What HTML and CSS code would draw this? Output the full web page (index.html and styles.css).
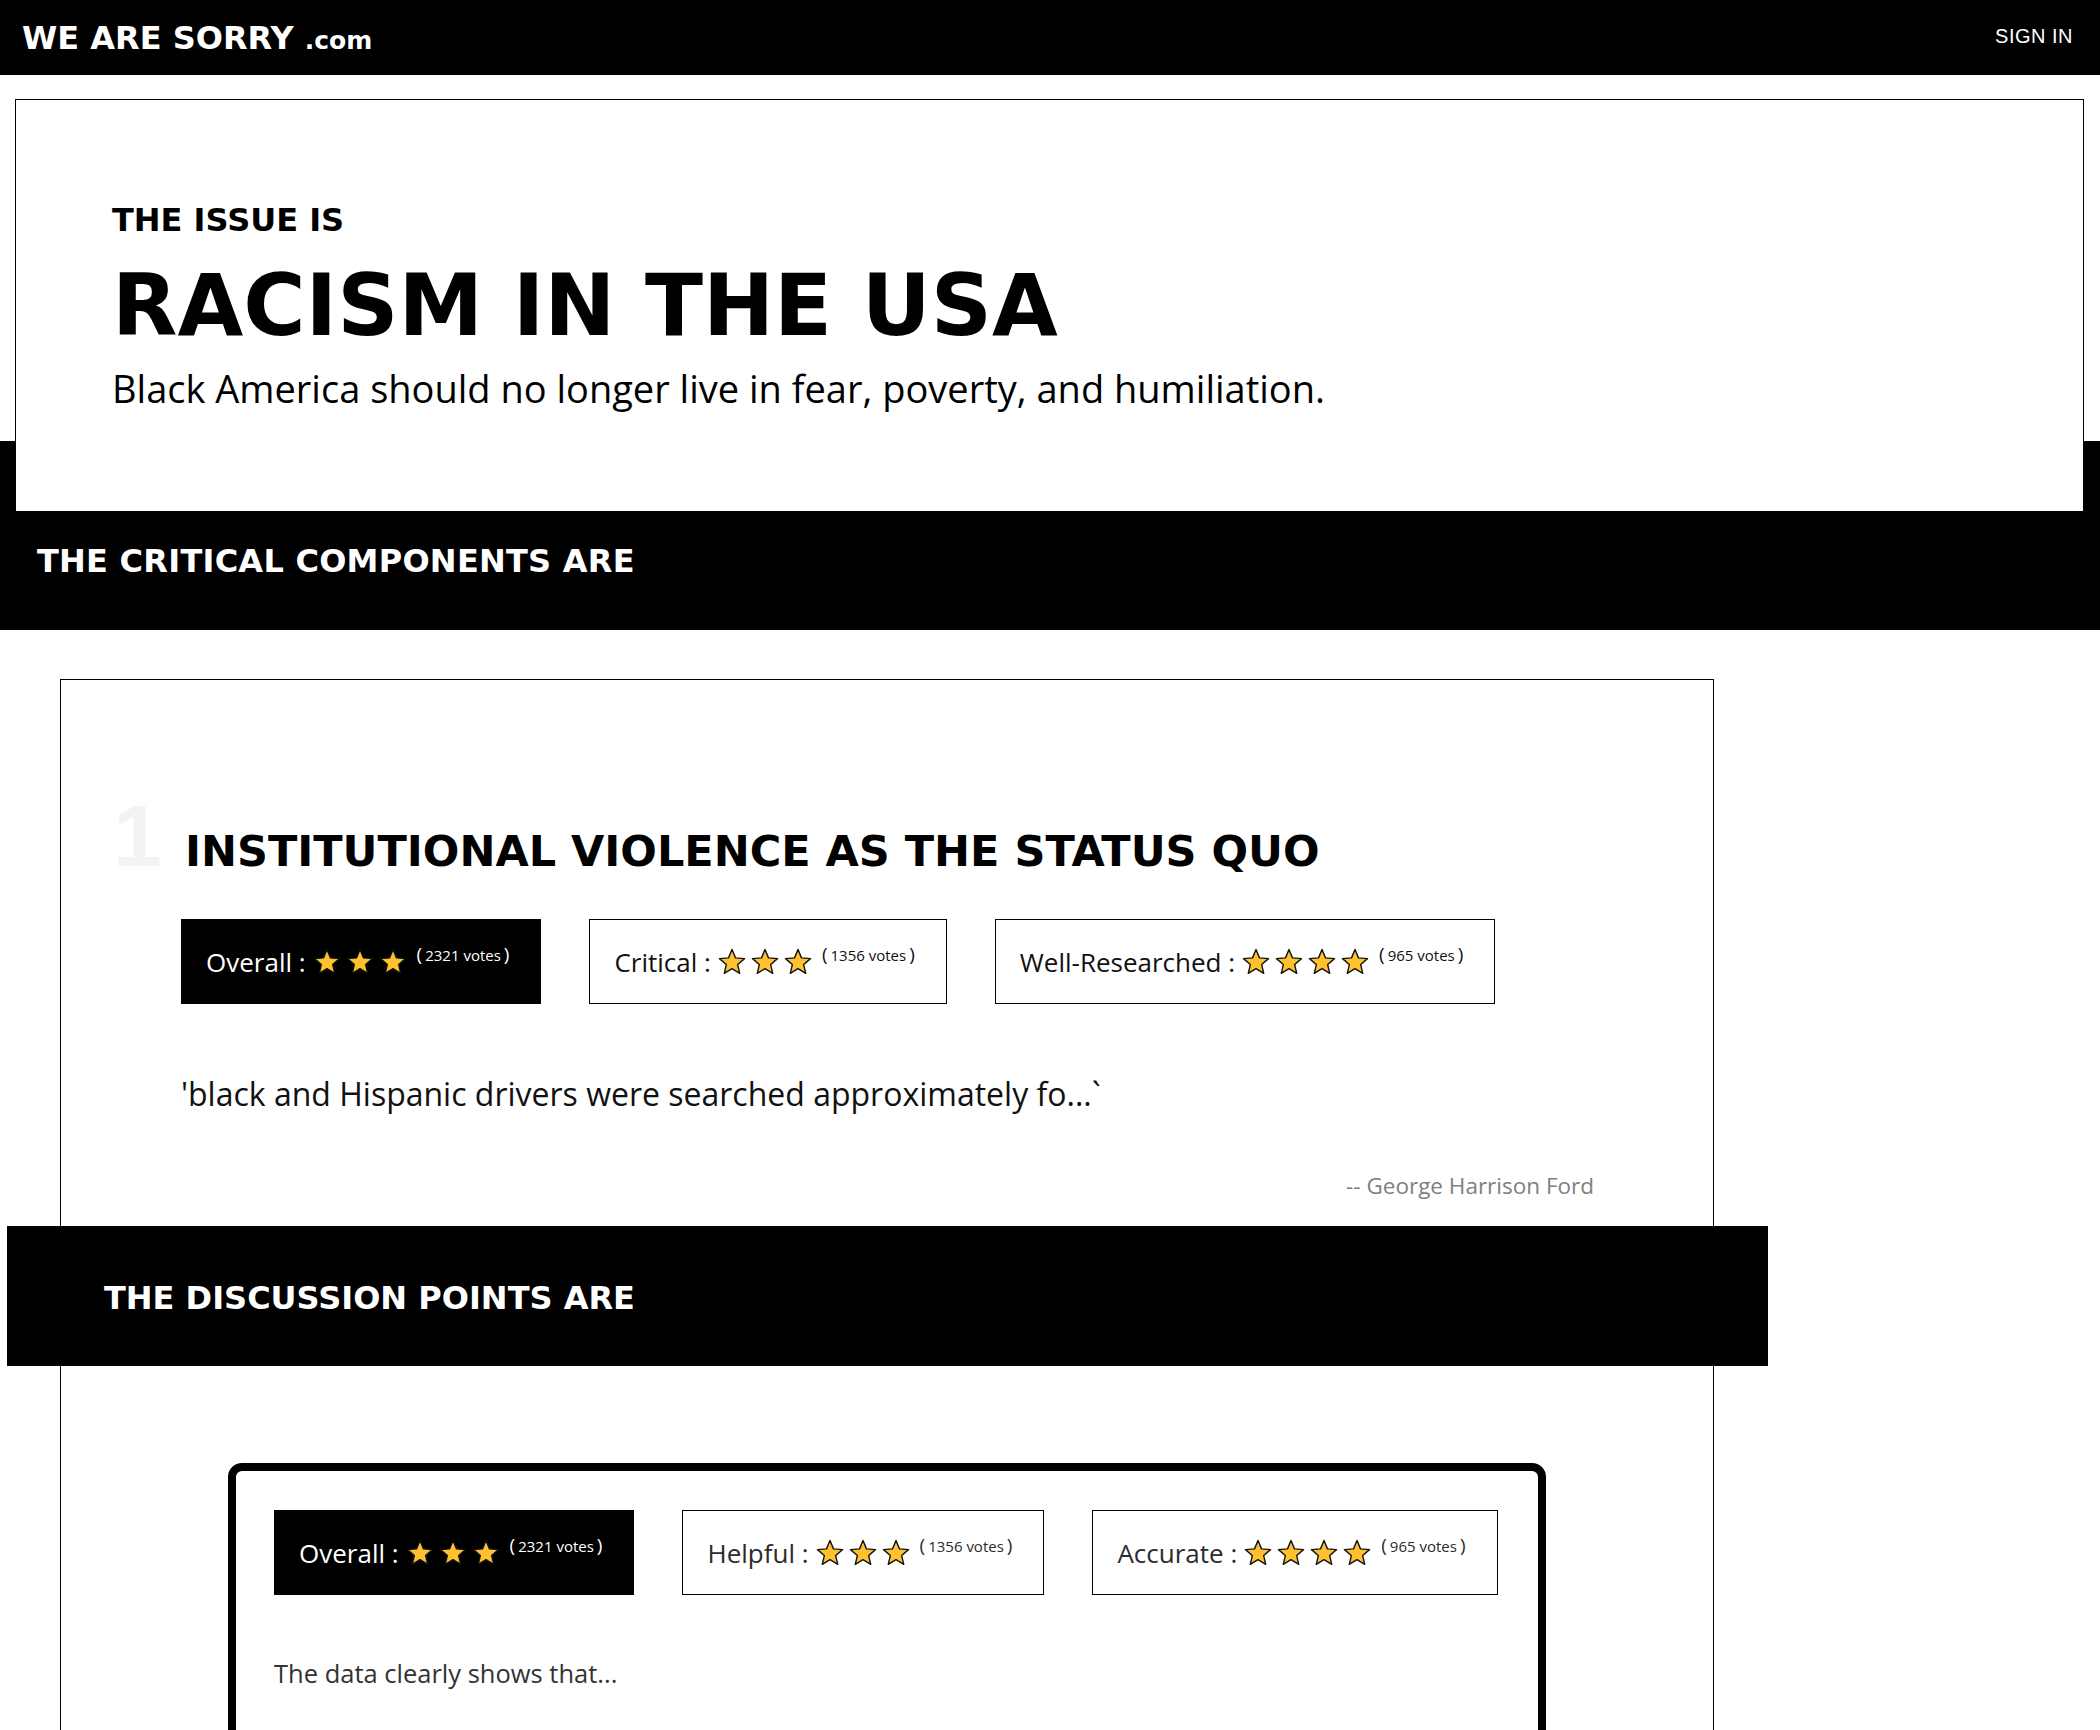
FILE: index.html
```html
<!DOCTYPE html>
<html lang="en">
<head>
<meta charset="utf-8">
<title>WE ARE SORRY .com</title>
<link rel="stylesheet" href="styles.css">
</head>
<body>
<svg class="sprite" aria-hidden="true">
  <symbol id="star" viewBox="0 0 24 24">
    <path d="M12 1.3 L15 8.47 L22.75 9.1 L16.85 14.18 L18.64 21.74 L12 17.7 L5.36 21.74 L7.15 14.18 L1.25 9.1 L9 8.47 Z"/>
  </symbol>
</svg>

<nav class="topbar">
  <a class="brand" href="#">WE ARE SORRY <span class="brand-tld">.com</span></a>
  <a class="signin" href="#">SIGN IN</a>
</nav>

<header class="issue">
  <div class="issue-card">
    <p class="issue-label">THE ISSUE IS</p>
    <h1 class="issue-title">RACISM IN THE USA</h1>
    <p class="issue-sub">Black America should no longer live in fear, poverty, and humiliation.</p>
  </div>
  <h2 class="band-title">THE CRITICAL COMPONENTS ARE</h2>
</header>

<main class="components">
  <article class="component">
    <div class="component-head">
      <span class="component-num">1</span>
      <h3 class="component-title">INSTITUTIONAL VIOLENCE AS THE STATUS QUO</h3>
    </div>
    <div class="ratings">
      <div class="rating rating-dark">
        <span class="rating-label">Overall :</span>
        <span class="stars">
          <svg class="star"><use href="#star"/></svg>
          <svg class="star"><use href="#star"/></svg>
          <svg class="star"><use href="#star"/></svg>
        </span>
        <span class="votes"><span class="paren">(</span>2321 votes<span class="paren">)</span></span>
      </div>
      <div class="rating">
        <span class="rating-label">Critical :</span>
        <span class="stars">
          <svg class="star"><use href="#star"/></svg>
          <svg class="star"><use href="#star"/></svg>
          <svg class="star"><use href="#star"/></svg>
        </span>
        <span class="votes"><span class="paren">(</span>1356 votes<span class="paren">)</span></span>
      </div>
      <div class="rating">
        <span class="rating-label">Well-Researched :</span>
        <span class="stars">
          <svg class="star"><use href="#star"/></svg>
          <svg class="star"><use href="#star"/></svg>
          <svg class="star"><use href="#star"/></svg>
          <svg class="star"><use href="#star"/></svg>
        </span>
        <span class="votes"><span class="paren">(</span>965 votes<span class="paren">)</span></span>
      </div>
    </div>
    <p class="quote">'black and Hispanic drivers were searched approximately fo...`</p>
    <p class="author">-- George Harrison Ford</p>
  </article>

  <section class="discussion">
    <h2 class="discussion-band">THE DISCUSSION POINTS ARE</h2>
    <div class="discussion-card">
      <div class="ratings">
        <div class="rating rating-dark">
          <span class="rating-label">Overall :</span>
          <span class="stars">
            <svg class="star"><use href="#star"/></svg>
            <svg class="star"><use href="#star"/></svg>
            <svg class="star"><use href="#star"/></svg>
          </span>
          <span class="votes"><span class="paren">(</span>2321 votes<span class="paren">)</span></span>
        </div>
        <div class="rating rating-soft">
          <span class="rating-label">Helpful :</span>
          <span class="stars">
            <svg class="star"><use href="#star"/></svg>
            <svg class="star"><use href="#star"/></svg>
            <svg class="star"><use href="#star"/></svg>
          </span>
          <span class="votes"><span class="paren">(</span>1356 votes<span class="paren">)</span></span>
        </div>
        <div class="rating rating-soft">
          <span class="rating-label">Accurate :</span>
          <span class="stars">
            <svg class="star"><use href="#star"/></svg>
            <svg class="star"><use href="#star"/></svg>
            <svg class="star"><use href="#star"/></svg>
            <svg class="star"><use href="#star"/></svg>
          </span>
          <span class="votes"><span class="paren">(</span>965 votes<span class="paren">)</span></span>
        </div>
      </div>
      <p class="discussion-text">The data clearly shows that...</p>
    </div>
  </section>
</main>
</body>
</html>
```

FILE: styles.css
```css
* {
  box-sizing: border-box;
}

html, body {
  margin: 0;
  padding: 0;
  background: #fff;
}

body {
  font-family: "Open Sans", sans-serif;
  color: #000;
}

h1, h2, h3, p {
  margin: 0;
}

a {
  color: inherit;
  text-decoration: none;
}

.sprite {
  position: absolute;
  width: 0;
  height: 0;
  overflow: hidden;
}

/* ---------- top bar ---------- */
.topbar {
  height: 75px;
  background: #000;
  color: #fff;
  display: flex;
  align-items: center;
  justify-content: space-between;
  padding: 0 27px 0 22px;
}

.brand {
  font-family: "DejaVu Sans", sans-serif;
  font-weight: 700;
  font-size: 32px;
  line-height: 1;
  white-space: nowrap;
}

.brand-tld {
  font-size: 25px;
}

.signin {
  font-family: "Liberation Sans", sans-serif;
  font-size: 20px;
  letter-spacing: 0.5px;
  line-height: 1;
  margin-bottom: 4px;
}

/* ---------- issue hero ---------- */
.issue {
  background: linear-gradient(to bottom, #fff 0, #fff 366px, #000 366px, #000 100%);
  padding: 24px 16px 0 15px;
}

.issue-card {
  background: #fff;
  border: 1px solid #000;
  padding: 101px 96px 97px 96px;
}

.issue-label {
  font-family: "DejaVu Sans", sans-serif;
  font-weight: 700;
  font-size: 32px;
  line-height: 38px;
}

.issue-title {
  font-family: "DejaVu Sans", sans-serif;
  font-weight: 700;
  font-size: 85px;
  line-height: 100px;
  margin-top: 17px;
}

.issue-sub {
  font-size: 38px;
  line-height: 52px;
  margin-top: 6px;
}

.band-title {
  font-family: "DejaVu Sans", sans-serif;
  font-weight: 700;
  font-size: 32px;
  line-height: 38px;
  letter-spacing: 0.25px;
  color: #fff;
  padding: 30px 22px 50px 22px;
}

/* ---------- components ---------- */
.components {
  margin: 49px 0 0 60px;
  width: 1654px;
  border: 1px solid #000;
}

.component {
  padding: 111px 119px 25px 120px;
}

.component-head {
  display: flex;
  align-items: baseline;
  margin-left: -68px;
}

.component-num {
  flex: 0 0 72px;
  font-family: "Liberation Sans", sans-serif;
  font-weight: 700;
  font-size: 88px;
  line-height: 90px;
  color: #f1f3f5;
}

.component-title {
  font-family: "DejaVu Sans", sans-serif;
  font-weight: 700;
  font-size: 43px;
  line-height: 50px;
}

.ratings {
  display: flex;
  gap: 48px;
}

.component .ratings {
  margin-top: 38px;
}

.rating {
  display: flex;
  align-items: center;
  height: 85px;
  border: 1px solid #000;
  background: #fff;
  color: #111;
  padding: 0 31px 0 24px;
}

.rating-dark {
  background: #000;
  color: #fff;
}

.rating-soft {
  color: #2b2b2b;
}

.rating-label {
  font-size: 26px;
  line-height: 32px;
  white-space: nowrap;
}

.stars {
  display: flex;
  gap: 5px;
  margin-left: 7px;
}

.star {
  width: 28px;
  height: 28px;
  fill: #ffc12e;
  stroke: #111;
  stroke-width: 1.2;
  stroke-linejoin: round;
}

.votes {
  font-size: 15px;
  line-height: 20px;
  white-space: nowrap;
  margin-left: 10px;
  margin-bottom: 14px;
}

.paren {
  font-size: 19px;
  margin: 0 3px;
}

.paren:first-child {
  margin-left: 0;
}

.paren:last-child {
  margin-right: 0;
}

.quote {
  font-size: 32px;
  line-height: 40px;
  color: #111;
  margin-top: 70px;
}

.author {
  font-size: 22.5px;
  line-height: 30px;
  color: #808080;
  text-align: right;
  margin-top: 57px;
}

/* ---------- discussion ---------- */
.discussion-band {
  margin: 0 -55px 0 -54px;
  height: 140px;
  display: flex;
  align-items: center;
  padding: 3px 0 0 97px;
  background: #000;
  color: #fff;
  font-family: "DejaVu Sans", sans-serif;
  font-weight: 700;
  font-size: 32px;
  line-height: 38px;
}

.discussion-card {
  width: 1318px;
  margin: 97px auto 0;
  border: 8px solid #000;
  border-radius: 14px;
  padding: 39px 38px 80px;
}

.discussion-text {
  font-size: 25.5px;
  line-height: 32px;
  color: #333;
  margin-top: 62px;
}
```
